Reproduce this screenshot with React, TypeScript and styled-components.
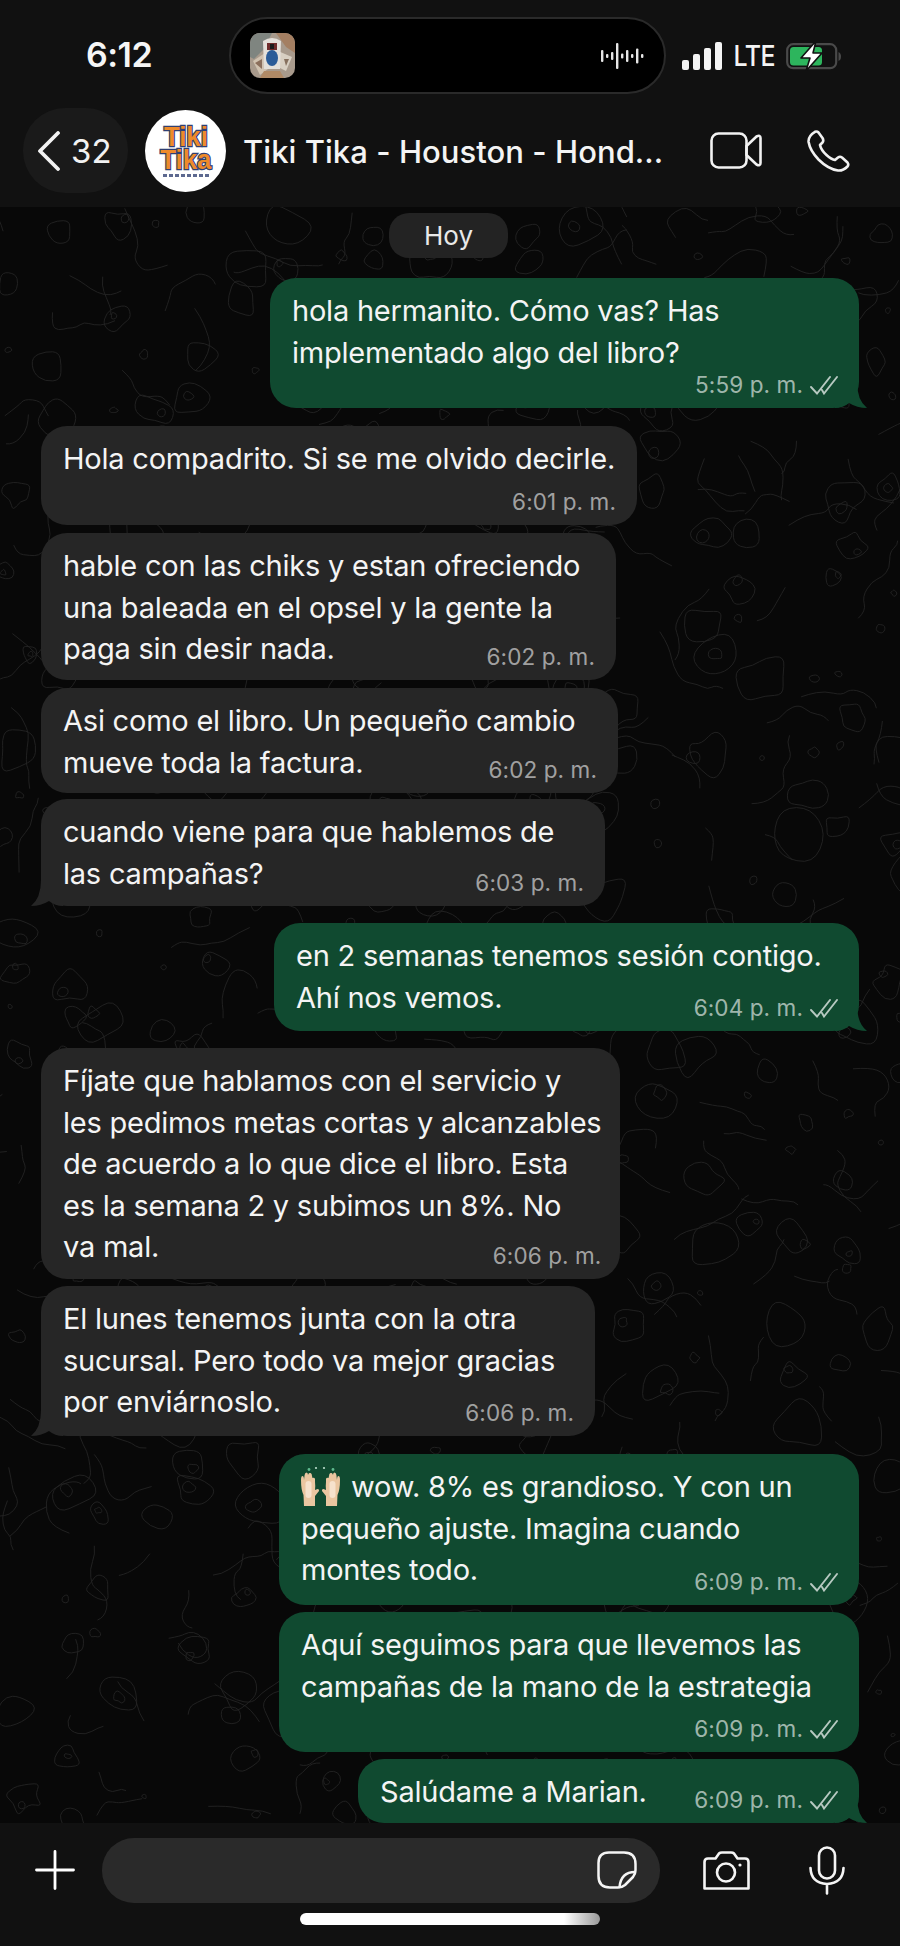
import React from "react";
import styled, { createGlobalStyle } from "styled-components";

const GlobalStyle = createGlobalStyle`
    html, body {
        margin: 0;
        padding: 0;
        background: #080808;
    }
    * {
        box-sizing: border-box;
    }
`;

const FONT = `Inter, "Noto Sans", "Liberation Sans", sans-serif`;

// deterministic doodles for the chat wallpaper
function makeDoodles() {
    let seed = 4711;
    const rnd = () => {
        seed = (seed * 16807) % 2147483647;
        return seed / 2147483647;
    };
    const smooth = (pts: number[][], closed: boolean) => {
        const mid = (a: number[], b: number[]) => [(a[0] + b[0]) / 2, (a[1] + b[1]) / 2];
        const n = pts.length;
        const f = (v: number) => v.toFixed(1);
        if (closed) {
            const s = mid(pts[n - 1], pts[0]);
            let d = `M${f(s[0])} ${f(s[1])}`;
            for (let i = 0; i < n; i++) {
                const m = mid(pts[i], pts[(i + 1) % n]);
                d += ` Q${f(pts[i][0])} ${f(pts[i][1])} ${f(m[0])} ${f(m[1])}`;
            }
            return d;
        }
        let d = `M${f(pts[0][0])} ${f(pts[0][1])}`;
        for (let i = 1; i < n - 1; i++) {
            const m = mid(pts[i], pts[i + 1]);
            d += ` Q${f(pts[i][0])} ${f(pts[i][1])} ${f(m[0])} ${f(m[1])}`;
        }
        return d;
    };
    const blob = (cx: number, cy: number, r: number) => {
        const n = 6 + Math.floor(rnd() * 5);
        const pts: number[][] = [];
        for (let i = 0; i < n; i++) {
            const a = (i / n) * Math.PI * 2;
            const rr = r * (0.55 + rnd() * 0.75);
            pts.push([cx + Math.cos(a) * rr, cy + Math.sin(a) * rr * (0.8 + rnd() * 0.3)]);
        }
        return smooth(pts, true);
    };
    const items: string[] = [];
    for (let y = 4; y < 1620; y += 44) {
        for (let x = 2; x < 900; x += 46) {
            const cx = x + rnd() * 30;
            const cy = y + rnd() * 30;
            const kind = rnd();
            if (kind < 0.32) {
                const r = 9 + rnd() * 17;
                items.push(blob(cx, cy, r));
                if (rnd() < 0.4) items.push(blob(cx + (rnd() - 0.5) * r, cy + (rnd() - 0.5) * r, r * 0.3));
            } else if (kind < 0.72) {
                const pts: number[][] = [[cx, cy]];
                let dir = rnd() * Math.PI * 2;
                const n = 4 + Math.floor(rnd() * 5);
                for (let i = 0; i < n; i++) {
                    dir += (rnd() - 0.5) * 2.2;
                    const last = pts[pts.length - 1];
                    const step = 7 + rnd() * 11;
                    pts.push([last[0] + Math.cos(dir) * step, last[1] + Math.sin(dir) * step]);
                }
                items.push(smooth(pts, false));
            } else if (kind < 0.88) {
                items.push(blob(cx, cy, 2.5 + rnd() * 3.5));
            }
        }
    }
    return items;
}

const doodles = makeDoodles();

function Wallpaper() {
    return (
        <WallpaperSvg viewBox="0 0 900 1616" width="900" height="1616">
            {doodles.map((d, i) => (
                <path key={i} d={d} fill="none" stroke="#242424" strokeWidth="0.9" />
            ))}
        </WallpaperSvg>
    );
}

function Waveform() {
    const bars = [12, 4, 8, 26, 5, 12, 4, 15, 4];
    return (
        <svg width="44" height="26" viewBox="0 0 44 26">
            {bars.map((h, i) => (
                <rect key={i} x={i * 5} y={13 - h / 2} width="2.4" height={h} rx="1" fill="#e6e6e6" />
            ))}
        </svg>
    );
}

function AlbumArt() {
    return (
        <svg width="45" height="45" viewBox="0 0 45 45">
            <defs>
                <clipPath id="artClip">
                    <rect width="45" height="45" rx="10" />
                </clipPath>
            </defs>
            <g clipPath="url(#artClip)">
                <rect width="45" height="45" fill="#a89a8c" />
                <path d="M0 0 H22 L14 16 L4 26 L0 24 Z" fill="#7f8580" />
                <path d="M26 0 H45 V20 L36 14 Z" fill="#a47f62" />
                <path d="M3 28 L15 20 L18 36 L10 42 Z" fill="#d0c2b0" />
                <path d="M5 30 L12 26 L12 36 Z" fill="#8b6f5c" />
                <path d="M28 18 L42 24 L36 38 L28 34 Z" fill="#d8cfc2" />
                <path d="M34 26 L39 26 L36 33 Z" fill="#86705e" />
                <path d="M13 8 Q22 2 31 8 L30 36 L14 36 Z" fill="#e4e0da" />
                <rect x="17" y="10" width="10" height="7" fill="#6f2c2c" />
                <rect x="20" y="11" width="4" height="5" fill="#1b1b1b" />
                <ellipse cx="22" cy="25" rx="6" ry="8" fill="#2b5c98" />
                <path d="M14 38 L30 38 L34 45 H10 Z" fill="#b08a66" />
            </g>
        </svg>
    );
}

function SignalIcon() {
    return (
        <svg width="41" height="28" viewBox="0 0 41 28" fill="#f4f4f4">
            <rect x="0" y="18" width="7" height="10" rx="2" />
            <rect x="11" y="12" width="7" height="16" rx="2" />
            <rect x="22" y="6" width="7" height="22" rx="2" />
            <rect x="33" y="0" width="7" height="28" rx="2" />
        </svg>
    );
}

function BatteryIcon() {
    return (
        <svg width="56" height="30" viewBox="0 0 56 30">
            <rect x="1.2" y="3.2" width="49" height="24" rx="6" fill="none" stroke="#4a4a4a" strokeWidth="2.2" />
            <rect x="4" y="6" width="32" height="18.5" rx="3.5" fill="#2db55d" />
            <path d="M52.5 11 Q55 12 55 15.5 Q55 19 52.5 20 Z" fill="#4a4a4a" />
            <path d="M30 0 L15 17 H24 L20 30 L36 12 H27 Z" fill="#fff" stroke="#111" strokeWidth="1.6" strokeLinejoin="round" />
        </svg>
    );
}

function VideoIcon() {
    return (
        <svg width="52" height="37" viewBox="0 0 52 37" fill="none" stroke="#f2f2f2" strokeWidth="2.6" strokeLinejoin="round">
            <rect x="1.5" y="1.5" width="35" height="34" rx="7" />
            <path d="M36.5 14 L46.5 4.5 Q50.5 2.5 50.5 6 V31 Q50.5 34.5 46.5 32.5 L36.5 23 Z" />
        </svg>
    );
}

function PhoneIcon() {
    return (
        <svg width="43" height="42" viewBox="0 0 43 42" fill="none" stroke="#f2f2f2" strokeWidth="2.6" strokeLinejoin="round">
            <path d="M8 1.8 Q10 1 11.5 2.5 L15.5 8 Q17 10.5 15.5 12.5 L13 15 Q14 20 19.5 25 Q24.5 29.5 28 30 L31 27.5 Q33 26 35 27.5 L40.5 32.5 Q42 34.5 40.5 36.5 Q36 41 31 40.5 Q21 39 11.5 29.5 Q3 20.5 1.6 12 Q1 6 8 1.8 Z" />
        </svg>
    );
}

function PlusIcon() {
    return (
        <svg width="40" height="40" viewBox="0 0 40 40" stroke="#fff" strokeWidth="2.8" strokeLinecap="round">
            <path d="M20 1.5 V38.5 M1.5 20 H38.5" />
        </svg>
    );
}

function StickerIcon() {
    return (
        <svg width="40" height="38" viewBox="0 0 40 38" fill="none" stroke="#f5f5f5" strokeWidth="2.5" strokeLinejoin="round" strokeLinecap="round">
            <path d="M12 1.5 H27 Q38.5 1.5 38.5 13 V19 Q38.5 23 36 26 L28 34 Q25 36.5 21 36.5 H13 Q1.5 36.5 1.5 25 V12 Q1.5 1.5 12 1.5 Z" />
            <path d="M38 21 Q24 21 22.5 36" />
        </svg>
    );
}

function CameraIcon() {
    return (
        <svg width="47" height="39" viewBox="0 0 47 39" fill="none" stroke="#f5f5f5" strokeWidth="2.6" strokeLinejoin="round">
            <path d="M1.5 11 Q1.5 7.5 5 7.5 H12.5 L16 2.5 Q17 1.5 19 1.5 H28 Q30 1.5 31 2.5 L34.5 7.5 H42 Q45.5 7.5 45.5 11 V37.5 H1.5 Z" />
            <circle cx="23" cy="21.5" r="9" />
            <circle cx="37" cy="14" r="1.6" fill="#f5f5f5" stroke="none" />
        </svg>
    );
}

function MicIcon() {
    return (
        <svg width="36" height="49" viewBox="0 0 36 49" fill="none" stroke="#f5f5f5" strokeWidth="2.6" strokeLinecap="round">
            <rect x="10" y="1.5" width="16" height="31" rx="8" />
            <path d="M1.5 22 Q2 37 18 38 Q34 37 34.5 22 M18 38 V47.5" />
        </svg>
    );
}

function DoubleCheck() {
    return (
        <svg width="28" height="19" viewBox="0 0 28 19" fill="none" stroke="rgba(255,255,255,0.7)" strokeWidth="1.9" strokeLinecap="round">
            <path d="M1 11 L7 17.5 L20 1 M12 14 L14 17.5 L27 1" />
        </svg>
    );
}

function HandsEmoji() {
    const hand = "M4 40 L3.5 29 Q1 24 1 14 Q1 10 2.5 10 Q4 10 4 14 L4.6 9 Q5 6.5 6.5 6.5 Q8 6.5 8 9 L8.4 8 Q9 6.5 10.5 7 Q12 7.5 12 10 L12.5 12 Q14.5 11 15 13 L15 16 Q15.5 20 15 24 L17.5 23 Q19.5 23 19 25 L15 30 V40 Z";
    return (
        <HandsWrap width="42" height="42" viewBox="0 0 42 42">
            <circle cx="9" cy="3.5" r="1.4" fill="#5fb98e" />
            <circle cx="16" cy="2" r="1.1" fill="#b9dccb" />
            <circle cx="24" cy="2" r="1.1" fill="#b9dccb" />
            <circle cx="33" cy="3.5" r="1.4" fill="#5fb98e" />
            <g fill="#eac6a0">
                <path d={hand} />
                <path d={hand} transform="translate(41 0) scale(-1 1)" />
            </g>
            <g fill="#f6e2cc">
                <rect x="5.5" y="15" width="6" height="17" rx="3" />
                <rect x="29.5" y="15" width="6" height="17" rx="3" />
            </g>
        </HandsWrap>
    );
}

function TikiLogo() {
    return (
        <Avatar>
            <LogoLine>Tiki</LogoLine>
            <LogoLine>Tika</LogoLine>
            <LogoStrip />
        </Avatar>
    );
}

type Msg = {
    out?: boolean;
    width: number;
    height: number;
    gap: number;
    tail?: boolean;
    emoji?: boolean;
    time: string;
    lines: string[];
};

const messages: Msg[] = [
    { out: true, width: 589, height: 130, gap: 20, tail: true, time: "5:59 p. m.", lines: ["hola hermanito. Cómo vas? Has", "implementado algo del libro?"] },
    { width: 596, height: 99, gap: 18, time: "6:01 p. m.", lines: ["Hola compadrito. Si se me olvido decirle."] },
    { width: 575, height: 147, gap: 8, time: "6:02 p. m.", lines: ["hable con las chiks y estan ofreciendo", "una baleada en el opsel y la gente la", "paga sin desir nada."] },
    { width: 577, height: 105, gap: 8, time: "6:02 p. m.", lines: ["Asi como el libro. Un pequeño cambio", "mueve toda la factura."] },
    { width: 564, height: 107, gap: 6, tail: true, time: "6:03 p. m.", lines: ["cuando viene para que hablemos de", "las campañas?"] },
    { out: true, width: 585, height: 108, gap: 17, tail: true, time: "6:04 p. m.", lines: ["en 2 semanas tenemos sesión contigo.", "Ahí nos vemos."] },
    { width: 579, height: 231, gap: 17, time: "6:06 p. m.", lines: ["Fíjate que hablamos con el servicio y", "les pedimos metas cortas y alcanzables", "de acuerdo a lo que dice el libro. Esta", "es la semana 2 y subimos un 8%. No", "va mal."] },
    { width: 554, height: 150, gap: 7, tail: true, time: "6:06 p. m.", lines: ["El lunes tenemos junta con la otra", "sucursal. Pero todo va mejor gracias", "por enviárnoslo."] },
    { out: true, width: 580, height: 151, gap: 18, emoji: true, time: "6:09 p. m.", lines: ["wow. 8% es grandioso. Y con un", "pequeño ajuste. Imagina cuando", "montes todo."] },
    { out: true, width: 580, height: 140, gap: 7, time: "6:09 p. m.", lines: ["Aquí seguimos para que llevemos las", "campañas de la mano de la estrategia"] },
    { out: true, width: 501, height: 64, gap: 7, tail: true, time: "6:09 p. m.", lines: ["Salúdame a Marian."] },
];

function App() {
    return (
        <Screen>
            <GlobalStyle />
            <Header>
                <StatusBar>
                    <Clock>6:12</Clock>
                    <Island>
                        <AlbumArt />
                        <Waveform />
                    </Island>
                    <StatusIcons>
                        <SignalIcon />
                        <Lte>LTE</Lte>
                        <BatteryIcon />
                    </StatusIcons>
                </StatusBar>
                <NavBar>
                    <BackPill>
                        <svg width="24" height="40" viewBox="0 0 24 40" fill="none" stroke="#f2f2f2" strokeWidth="3.8" strokeLinecap="round" strokeLinejoin="round">
                            <path d="M21 2 L3 20 L21 38" />
                        </svg>
                        <BackCount>32</BackCount>
                    </BackPill>
                    <TikiLogo />
                    <Title>Tiki Tika - Houston - Hond...</Title>
                    <NavActions>
                        <VideoIcon />
                        <PhoneIcon />
                    </NavActions>
                </NavBar>
            </Header>
            <Chat>
                <Wallpaper />
                <DayChip>Hoy</DayChip>
                {messages.map((m, i) => (
                    <Bubble key={i} $out={m.out} $width={m.width} $height={m.height} $gap={m.gap} $tail={m.tail}>
                        <BubbleText>
                            {m.lines.map((line, j) => (
                                <TextLine key={j}>
                                    {m.emoji && j === 0 && <HandsEmoji />}
                                    {line}
                                </TextLine>
                            ))}
                        </BubbleText>
                        <Meta>
                            <TimeLabel $out={m.out}>{m.time}</TimeLabel>
                            {m.out && <DoubleCheck />}
                        </Meta>
                    </Bubble>
                ))}
            </Chat>
            <Composer>
                <ComposerRow>
                    <PlusIcon />
                    <InputField>
                        <StickerIcon />
                    </InputField>
                    <ComposerActions>
                        <CameraIcon />
                        <MicIcon />
                    </ComposerActions>
                </ComposerRow>
                <HomeBar />
            </Composer>
        </Screen>
    );
}

const Screen = styled.div`
    width: 900px;
    height: 1946px;
    display: flex;
    flex-direction: column;
    overflow: hidden;
    font-family: ${FONT};
    color: #f5f5f5;
    background: #080808;
`;

const Header = styled.div`
    height: 207px;
    flex: none;
    display: flex;
    flex-direction: column;
    background: #111111;
`;

const StatusBar = styled.div`
    height: 108px;
    display: flex;
    align-items: flex-start;
    padding-top: 17px;
    padding-left: 86px;
`;

const Clock = styled.div`
    width: 143px;
    height: 77px;
    line-height: 76px;
    font-size: 34px;
    font-weight: 600;
    letter-spacing: -0.5px;
    color: #f6f6f6;
`;

const Island = styled.div`
    width: 437px;
    height: 77px;
    background: #000;
    border: 2.5px solid #2a2a2a;
    border-radius: 39px;
    display: flex;
    align-items: center;
    justify-content: space-between;
    padding: 0 19px 0 19px;
`;

const StatusIcons = styled.div`
    height: 77px;
    display: flex;
    align-items: center;
    margin-left: 16px;
    gap: 10px;
`;

const Lte = styled.span`
    font-size: 29px;
    font-weight: 500;
    letter-spacing: -0.5px;
    color: #f4f4f4;
    transform: scaleX(0.86);
    margin: 0 -3px;
`;

const NavBar = styled.div`
    height: 85px;
    display: flex;
    align-items: center;
    padding-left: 23px;
`;

const BackPill = styled.div`
    width: 105px;
    height: 85px;
    border-radius: 42px;
    background: #1a1a1a;
    display: flex;
    align-items: center;
    gap: 10px;
    padding-left: 14px;
`;

const BackCount = styled.span`
    font-size: 33px;
    color: #f2f2f2;
`;

const Avatar = styled.div`
    width: 81px;
    height: 82px;
    margin-left: 17px;
    flex: none;
    border-radius: 50%;
    background: #fff;
    display: flex;
    flex-direction: column;
    align-items: center;
    justify-content: center;
    font-family: "Liberation Sans", sans-serif;
`;

const LogoLine = styled.span`
    font-size: 28px;
    line-height: 23px;
    font-weight: 700;
    color: #ee8a2a;
    letter-spacing: 0;
    -webkit-text-stroke: 2.4px #2f3f73;
    paint-order: stroke fill;
    transform: scaleX(0.92);
`;

const LogoStrip = styled.div`
    width: 46px;
    height: 3px;
    margin-top: 3px;
    opacity: 0.75;
    background: repeating-linear-gradient(90deg, #27376b 0 4px, transparent 4px 6px);
`;

const Title = styled.div`
    margin-left: 17px;
    margin-top: 2px;
    width: 429px;
    font-size: 31px;
    font-weight: 500;
    letter-spacing: 0.05px;
    color: #f4f4f4;
    white-space: nowrap;
    overflow: hidden;
`;

const NavActions = styled.div`
    display: flex;
    align-items: center;
    gap: 45px;
    margin-left: 38px;
`;

const Chat = styled.div`
    position: relative;
    height: 1616px;
    flex: none;
    overflow: hidden;
    display: flex;
    flex-direction: column;
    padding: 6px 41px 0;
    background: #080808;
`;

const WallpaperSvg = styled.svg`
    position: absolute;
    top: 0;
    left: 0;
`;

const DayChip = styled.div`
    position: relative;
    align-self: center;
    width: 119px;
    height: 45px;
    flex: none;
    margin-left: -3px;
    border-radius: 20px;
    background: #232323;
    text-align: center;
    line-height: 45px;
    font-size: 26px;
    color: #e9e9e9;
`;

const Bubble = styled.div<{ $out?: boolean; $width: number; $height: number; $gap: number; $tail?: boolean }>`
    position: relative;
    flex: none;
    align-self: ${(p) => (p.$out ? "flex-end" : "flex-start")};
    width: ${(p) => p.$width}px;
    height: ${(p) => p.$height}px;
    margin-top: ${(p) => p.$gap}px;
    padding: 12px 21px 8px 22px;
    border-radius: 26px;
    background: ${(p) => (p.$out ? "#104a30" : "#262626")};
    display: grid;

    &::after {
        content: "";
        display: ${(p) => (p.$tail ? "block" : "none")};
        position: absolute;
        bottom: 0;
        ${(p) => (p.$out ? "right: -8px;" : "left: -10px;")}
        width: 32px;
        height: 26px;
        background: inherit;
        clip-path: ${(p) =>
            p.$out
                ? `path("M0 0 H22 Q22 18 32 26 Q22 26 14 21 Q8 26 0 26 Z")`
                : `path("M32 0 H10 Q10 18 0 26 Q10 26 18 21 Q24 26 32 26 Z")`};
    }
`;

const BubbleText = styled.div`
    grid-area: 1 / 1;
    position: relative;
    z-index: 1;
    display: flex;
    flex-direction: column;
    align-items: flex-start;
    font-size: 29px;
    color: #f4f4f4;
    letter-spacing: -0.22px;
`;

const TextLine = styled.div`
    height: 41.5px;
    line-height: 41.5px;
    display: flex;
    align-items: center;
    white-space: nowrap;
`;

const HandsWrap = styled.svg`
    flex: none;
    margin-left: -1px;
    margin-right: 9px;
`;

const Meta = styled.div`
    grid-area: 1 / 1;
    position: relative;
    z-index: 1;
    justify-self: end;
    align-self: end;
    display: flex;
    align-items: center;
    gap: 7px;
`;

const TimeLabel = styled.span<{ $out?: boolean }>`
    font-size: 22.5px;
    line-height: 30px;
    letter-spacing: 0.1px;
    color: ${(p) => (p.$out ? "rgba(255,255,255,0.62)" : "rgba(255,255,255,0.58)")};
`;

const Composer = styled.div`
    height: 123px;
    flex: none;
    position: relative;
    background: #111111;
    display: flex;
    flex-direction: column;
    align-items: center;
`;

const ComposerRow = styled.div`
    width: 100%;
    height: 90px;
    flex: none;
    display: flex;
    align-items: center;
    padding: 4px 0 0 35px;
`;

const InputField = styled.div`
    width: 558px;
    height: 65px;
    margin-left: 27px;
    border-radius: 32px;
    background: #2a2a2a;
    display: flex;
    align-items: center;
    justify-content: flex-end;
    padding-right: 23px;
    flex: none;
`;

const ComposerActions = styled.div`
    display: flex;
    align-items: center;
    gap: 59px;
    margin-left: 43px;
`;

const HomeBar = styled.div`
    width: 300px;
    height: 12px;
    border-radius: 6px;
    background: linear-gradient(90deg, #fff 0%, #fff 88%, #9a9a9a 100%);
`;

export default App;
